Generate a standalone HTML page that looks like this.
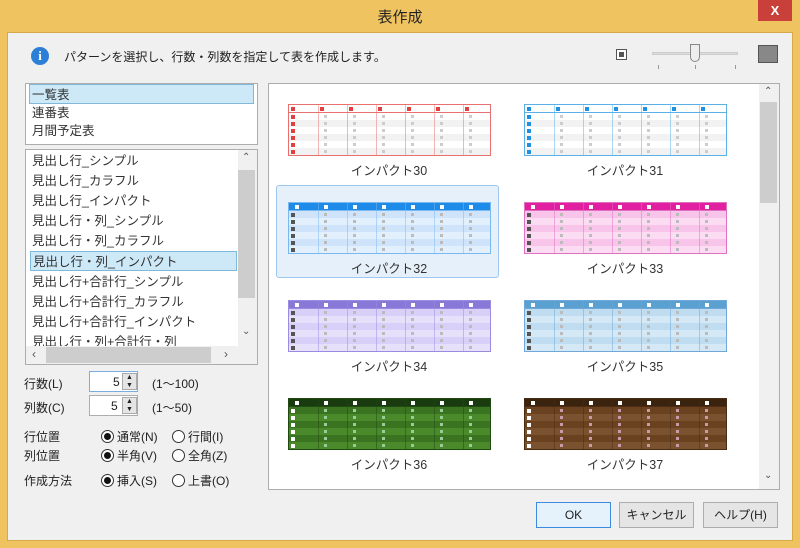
<!DOCTYPE html>
<html><head><meta charset="utf-8"><style>
*{margin:0;padding:0;box-sizing:border-box}
body{width:800px;height:548px;background:#efc35f;font-family:"Liberation Sans","Noto Sans CJK JP",sans-serif;font-size:12px;color:#222;position:relative;overflow:hidden}
.a{position:absolute}
#win{left:7px;top:32px;width:786px;height:509px;background:#f0f0f0;border:1px solid #d8a94a}
.box{background:#fff;border:1px solid #adadad}
.btn{border:1px solid #adadad;background:#e5e5e5;text-align:center;line-height:24px;font-size:12px}
.li{position:absolute;left:6px;height:20px;line-height:20px;font-size:12.5px;white-space:nowrap;color:#333}
.sel{background:#cde8f7;border:1px solid #7fb8d8;left:4px;right:4px;padding-left:2px}
.lab{font-size:12.5px;text-align:center;width:222px;color:#333}
.radio{width:13px;height:13px;border:1px solid #333;border-radius:50%;background:#fff;display:inline-block;vertical-align:-2px;margin-right:3px;position:relative}
.radio.on::after{content:"";position:absolute;left:2px;top:2px;width:7px;height:7px;border-radius:50%;background:#111}
.sb{background:#f0f0f0}
</style></head><body>
<div class="a" style="left:0;top:6px;width:800px;text-align:center;font-size:15px;color:#222">表作成</div>
<div class="a" style="left:758px;top:0;width:34px;height:21px;background:#c9403a;color:#fff;text-align:center;font-weight:bold;line-height:21px;font-size:13px">X</div>
<div id="win" class="a"></div>
<div class="a" style="left:31px;top:47px;width:18px;height:18px;border-radius:50%;background:#2c7fd6;color:#fff;text-align:center;font:bold 13px/18px 'Liberation Serif',serif">i</div>
<div class="a" style="left:64px;top:48px;font-size:12px">パターンを選択し、行数・列数を指定して表を作成します。</div>
<div class="a" style="left:616px;top:49px;width:11px;height:11px;border:1px solid #555;background:#fff"><div style="margin:2px;width:5px;height:5px;background:#555"></div></div>
<div class="a" style="left:652px;top:52px;width:86px;height:3px;background:#ddd;border:1px solid #ccc"></div>
<div class="a" style="left:690px;top:44px;width:10px;height:18px;background:#eee;border:1px solid #888;border-radius:0 0 5px 5px"></div>
<div class="a" style="left:758px;top:45px;width:20px;height:18px;border:1px solid #555;background:#888"></div>
<div class="a" style="left:658px;top:65px;width:1px;height:4px;background:#999"></div>
<div class="a" style="left:695px;top:65px;width:1px;height:4px;background:#999"></div>
<div class="a" style="left:735px;top:65px;width:1px;height:4px;background:#999"></div>

<div class="a box" style="left:25px;top:83px;width:233px;height:62px">
<div class="li sel" style="top:0;left:3px;right:3px">一覧表</div>
<div class="li" style="top:19px">連番表</div>
<div class="li" style="top:37px">月間予定表</div>
</div>
<div class="a box" style="left:25px;top:149px;width:233px;height:216px;overflow:hidden">
<div class="li" style="top:1px">見出し行_シンプル</div>
<div class="li" style="top:21px">見出し行_カラフル</div>
<div class="li" style="top:41px">見出し行_インパクト</div>
<div class="li" style="top:61px">見出し行・列_シンプル</div>
<div class="li" style="top:81px">見出し行・列_カラフル</div>
<div class="li sel" style="top:101px;left:4px;right:20px">見出し行・列_インパクト</div>
<div class="li" style="top:122px">見出し行+合計行_シンプル</div>
<div class="li" style="top:142px">見出し行+合計行_カラフル</div>
<div class="li" style="top:162px">見出し行+合計行_インパクト</div>
<div class="li" style="top:182px">見出し行・列+合計行・列</div>
<div class="a sb" style="left:212px;top:0;width:20px;height:196px"><div style="position:absolute;left:0;top:20px;width:17px;height:128px;background:#cdcdcd"></div><div style="position:absolute;left:4px;top:2px;font-size:10px;color:#555">⌃</div><div style="position:absolute;left:4px;top:176px;font-size:10px;color:#555">⌄</div></div>
<div class="a sb" style="left:0;top:196px;width:232px;height:19px"><div style="position:absolute;left:20px;top:1px;width:165px;height:16px;background:#cdcdcd"></div><span style="position:absolute;left:6px;top:1px;color:#555">‹</span><span style="position:absolute;left:198px;top:1px;color:#555">›</span></div>
</div>

<div class="a" style="left:24px;top:375px">行数(L)</div>
<div class="a" style="left:24px;top:399px">列数(C)</div>
<div class="a" style="left:89px;top:371px;width:49px;height:21px;background:#fff;border:1px solid #7aaee0"></div>
<div class="a" style="left:113px;top:375px;font-size:12px">5</div>
<div class="a" style="left:89px;top:395px;width:49px;height:21px;background:#fff;border:1px solid #adadad"></div>
<div class="a" style="left:111px;top:399px;font-size:12px">5</div>
<div class="a" style="left:122px;top:373px;width:15px;height:17px;background:#e5e5e5;border:1px solid #aaa;font-size:7px;text-align:center;line-height:8px">▲<br>▼</div>
<div class="a" style="left:122px;top:397px;width:15px;height:17px;background:#e5e5e5;border:1px solid #aaa;font-size:7px;text-align:center;line-height:8px">▲<br>▼</div>
<div class="a" style="left:152px;top:375px">(1～100)</div>
<div class="a" style="left:152px;top:399px">(1～50)</div>
<div class="a" style="left:24px;top:428px">行位置</div>
<div class="a" style="left:24px;top:447px">列位置</div>
<div class="a" style="left:24px;top:472px">作成方法</div>
<div class="a" style="left:101px;top:428px"><span class="radio on"></span>通常(N)</div>
<div class="a" style="left:172px;top:428px"><span class="radio"></span>行間(I)</div>
<div class="a" style="left:101px;top:447px"><span class="radio on"></span>半角(V)</div>
<div class="a" style="left:172px;top:447px"><span class="radio"></span>全角(Z)</div>
<div class="a" style="left:101px;top:472px"><span class="radio on"></span>挿入(S)</div>
<div class="a" style="left:172px;top:472px"><span class="radio"></span>上書(O)</div>

<div class="a box" style="left:268px;top:83px;width:512px;height:407px;overflow:hidden" id="pane">
<div class="a" style="left:7px;top:101px;width:223px;height:93px;background:#e5f0fb;border:1px solid #9ec7ee;border-radius:3px"></div>
<div class="a sb" style="left:490px;top:0;width:20px;height:405px"><div style="position:absolute;left:1px;top:18px;width:17px;height:101px;background:#cdcdcd"></div><div style="position:absolute;left:5px;top:2px;font-size:10px;color:#555">⌃</div><div style="position:absolute;left:5px;top:386px;font-size:10px;color:#555">⌄</div></div>
</div>
<div class="a btn" style="left:536px;top:502px;width:75px;height:26px;border-color:#3c8be0;background:#e5f1fb">OK</div>
<div class="a btn" style="left:619px;top:502px;width:75px;height:26px">キャンセル</div>
<div class="a btn" style="left:703px;top:502px;width:75px;height:26px">ヘルプ(H)</div>
<script>
var P=document.getElementById('pane');
var T=[
['#e87070','#fff','#e04040','#fff','#f2f2f2','#e04040','#ccc'],
['#5ab0e8','#fff','#2090e0','#fff','#f2f2f2','#2090e0','#ccc'],
['#7ab8f0','#1e8be8','#fff','#cfe4fa','#e2effc','#555','#bbb'],
['#e070c0','#e020a0','#fff','#f8c4ea','#fcdcf2','#555','#bbb'],
['#9c8ce0','#8878d8','#fff','#d8d0f8','#e6e0fb','#555','#bbb'],
['#70a8d8','#5aa0d0','#fff','#c0dcf0','#d4e8f6','#555','#bbb'],
['#204a14','#1a3a10','#fff','#3a7420','#4a8a2a','#fff','#9c9'],
['#4a2c14','#3a2410','#fff','#6a4220','#7a5230','#fff','#c9a']];
var names=['インパクト30','インパクト31','インパクト32','インパクト33','インパクト34','インパクト35','インパクト36','インパクト37'];
for(var i=0;i<8;i++){
 var c=T[i],col=i%2,row=(i/2|0);
 var x=(col?255:19),y=20+row*98;
 var h='<div class="a" style="left:'+x+'px;top:'+y+'px;width:203px;height:52px;border:1px solid '+c[0]+';background:'+c[3]+'">';
 h+='<div style="height:8px;background:'+c[1]+';border-bottom:1px solid '+c[0]+'"></div>';
 for(var r=0;r<6;r++)h+='<div style="height:7px;background:'+(r%2?c[4]:c[3])+'"></div>';
 for(var k=0;k<7;k++){var lx=1+k*29;
  if(k)h+='<div class="a" style="left:'+(k*29)+'px;top:0;width:1px;height:50px;background:'+c[0]+';opacity:.5"></div>';
  h+='<div class="a" style="left:'+(lx+(i<2?1:5))+'px;top:2px;width:4px;height:4px;background:'+c[2]+'"></div>';
  for(var r=0;r<6;r++)h+='<div class="a" style="left:'+(lx+(k==0?1:5))+'px;top:'+(10+r*7)+'px;width:'+(k?3:4)+'px;height:'+(k?3:4)+'px;background:'+(k?c[6]:c[5])+'"></div>';}
 h+='</div><div class="a lab" style="left:'+(x-10)+'px;top:'+(y+56)+'px">'+names[i]+'</div>';
 P.insertAdjacentHTML('beforeend',h);
}
</script>
</body></html>
